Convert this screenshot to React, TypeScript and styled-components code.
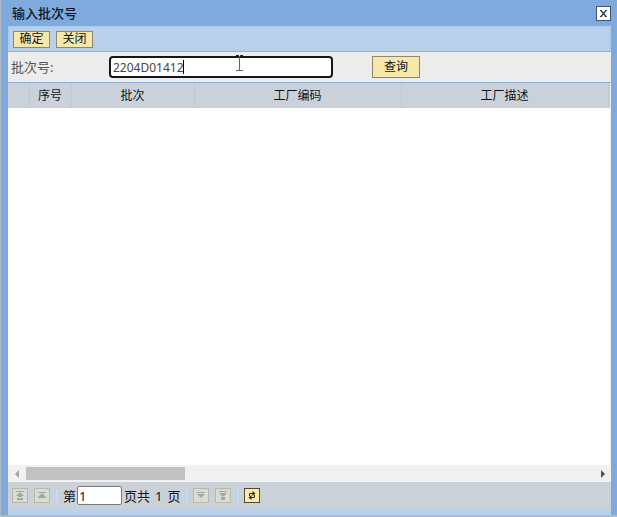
import React, { useState } from "react";
import styled, { createGlobalStyle } from "styled-components";

const GlobalStyle = createGlobalStyle`
  *, *::before, *::after { box-sizing: border-box; }
  body {
    margin: 0;
    color: #10141c;
    background: #b3b6ba;
    font: 12px/16px "Noto Sans", "Noto Sans CJK SC", sans-serif;
  }
  button, input { font: inherit; color: inherit; margin: 0; }
`;

const Dialog = styled.section`
  display: flex;
  flex-direction: column;
  min-height: 100vh;
  padding: 0 6px 0 7px;
  background: #7eaade;
  border: solid #b3b9c3;
  border-width: 0 0 2px 1px;
`;

const TitleBar = styled.header`
  display: flex;
  align-items: center;
  justify-content: space-between;
  height: 26px;
  padding-left: 4px;
`;

const Title = styled.h1`
  margin: 0;
  font-size: 13px;
  font-weight: 500;
`;

const CloseButton = styled.button`
  display: grid;
  place-items: center;
  width: 15px;
  height: 15px;
  padding: 0;
  background: #fff;
  border: 1px solid #3f5279;
`;

const Toolbar = styled.div`
  display: flex;
  align-items: center;
  gap: 6px;
  height: 26px;
  padding: 0 4px;
  background: #b8d0e9;
  border: 1px solid #a9c9ef;
  border-bottom-color: #8dafdc;
`;

const ActionButton = styled.button<{ $large?: boolean }>`
  display: grid;
  place-items: center;
  width: ${(p) => (p.$large ? 48 : 37)}px;
  height: ${(p) => (p.$large ? 22 : 17)}px;
  padding: 0;
  line-height: 14px;
  background: #f6e8aa;
  border: 1px solid #92866f;
`;

const QueryForm = styled.form`
  display: flex;
  align-items: center;
  height: 31px;
  padding-left: 3px;
  background: #ececec;
  border-bottom: 1px solid #8daad5;
`;

const FieldLabel = styled.label`
  width: 98px;
  font-size: 13px;
  color: #50545a;
`;

const FieldBox = styled.div`
  position: relative;
  width: 224px;
  margin-right: 39px;
`;

const BatchInput = styled.input`
  display: block;
  width: 100%;
  height: 22px;
  padding: 0 2px;
  color: #454545;
  background: #fff;
  border: 2px solid #14161b;
  border-radius: 4px;
  outline: none;
`;

const Caret = styled.span`
  position: absolute;
  top: 4px;
  left: 74px;
  width: 1px;
  height: 14px;
  background: #000;
`;

const Pointer = styled.svg`
  position: absolute;
  top: -1px;
  left: 126px;
  pointer-events: none;
`;

const TableArea = styled.div`
  flex: 1;
  overflow: hidden;
  background: #fff;
  border-right: 1px solid #e8edf5;
`;

const Table = styled.table`
  width: 130%;
  min-width: 700px;
  table-layout: fixed;
  border-collapse: collapse;
`;

const HeadCell = styled.th<{ $width?: number }>`
  width: ${(p) => (p.$width ? `${p.$width}px` : "auto")};
  height: 25px;
  padding: 0;
  font-weight: 400;
  background: #cbd1d9;
  border-right: 1px solid #c1c7d0;
`;

const ScrollBar = styled.div`
  display: grid;
  grid-template-columns: 18px 1fr 18px;
  align-items: center;
  height: 17px;
  background: #f1f1f1;
`;

const ScrollButton = styled.button`
  display: grid;
  place-items: center;
  height: 17px;
  padding: 0;
  background: none;
  border: 0;
`;

const ScrollThumb = styled.div`
  width: 28%;
  height: 13px;
  background: #c1c1c1;
`;

const Pager = styled.footer`
  display: flex;
  align-items: center;
  height: 27px;
  padding-left: 4px;
  background: #cbd1d9;
  font-size: 13px;
`;

const PagerButtons = styled.div`
  display: flex;
  gap: 6px;
`;

const PagerButton = styled.button<{ $active?: boolean }>`
  display: grid;
  place-items: center;
  width: 16px;
  height: 15px;
  padding: 0;
  color: ${(p) => (p.$active ? "#29261e" : "#a4a9a0")};
  background: ${(p) => (p.$active ? "#ffebaa" : "#dadcd4")};
  border: 1px solid ${(p) => (p.$active ? "#51483d" : "#b7baaf")};
`;

const Separator = styled.span`
  width: 2px;
  height: 14px;
  margin: 0 5px 0 6px;
  background: #bfdcff;
`;

const PageInput = styled.input`
  width: 45px;
  height: 19px;
  margin: 0 2px 0 1px;
  padding: 0 1px;
  background: #fff;
  border: 1px solid #777b80;
  border-radius: 2px;
`;

const PageTotal = styled.span`
  display: flex;
  gap: 5px;
  white-space: nowrap;
`;

const StatusStrip = styled.div`
  height: 6px;
  background: #b9d1ec;
`;

const columns: { name: string; width?: number }[] = [
  { name: "", width: 21 },
  { name: "序号", width: 42 },
  { name: "批次", width: 123 },
  { name: "工厂编码", width: 207 },
  { name: "工厂描述", width: 207 },
  { name: "" },
];

function PageIcon({ down = false, end = false }: { down?: boolean; end?: boolean }) {
  return (
    <svg width="10" height="9" viewBox="0 0 10 9" aria-hidden="true">
      <path d={end ? "M1 0h8v1H1z" : "M1 1h8v1H1z"} fill="currentColor" />
      {end ? (
        <path
          d={down ? "M1 2h8L5 6zM3 6h4v3H3z" : "M5 1l4 4H7v1H3V5H1zM2 7h6v2H2z"}
          fill="currentColor"
        />
      ) : (
        <path d={down ? "M1 3h8L5 7z" : "M5 2l4 4v1H1V6z"} fill="currentColor" />
      )}
    </svg>
  );
}

export default function App() {
  const [batch, setBatch] = useState("2204D01412");
  const [page, setPage] = useState("1");

  return (
    <>
      <GlobalStyle />
      <Dialog role="dialog" aria-labelledby="dialog-title">
        <TitleBar>
          <Title id="dialog-title">输入批次号</Title>
          <CloseButton aria-label="关闭窗口">
            <svg width="9" height="9" viewBox="0 0 9 9" fill="none" aria-hidden="true">
              <path d="M2 1.5l5 6M7 1.5l-5 6" stroke="#323b52" strokeWidth="1.4" />
              <path d="M1 1.5h2M6 1.5h2M1 7.5h2M6 7.5h2" stroke="#323b52" />
            </svg>
          </CloseButton>
        </TitleBar>
        <Toolbar>
          <ActionButton>确定</ActionButton>
          <ActionButton>关闭</ActionButton>
        </Toolbar>
        <QueryForm onSubmit={(e) => e.preventDefault()}>
          <FieldLabel htmlFor="batch">批次号:</FieldLabel>
          <FieldBox>
            <BatchInput id="batch" value={batch} onChange={(e) => setBatch(e.target.value)} />
            <Caret />
            <Pointer width="9" height="17" viewBox="0 0 9 17" fill="none" aria-hidden="true">
              <path d="M1 .5h2.5l1 1 1-1H8" stroke="#14161b" />
              <path d="M4.5 1v14M1 15.5h7" stroke="#606266" />
            </Pointer>
          </FieldBox>
          <ActionButton $large type="submit">
            查询
          </ActionButton>
        </QueryForm>
        <TableArea>
          <Table>
            <thead>
              <tr>
                {columns.map((column, i) => (
                  <HeadCell key={i} scope="col" $width={column.width}>
                    {column.name}
                  </HeadCell>
                ))}
              </tr>
            </thead>
            <tbody />
          </Table>
        </TableArea>
        <ScrollBar>
          <ScrollButton aria-label="向左滚动">
            <svg width="5" height="8" viewBox="0 0 5 8" aria-hidden="true">
              <path d="M4 0v8L0 4z" fill="#a3a3a3" />
            </svg>
          </ScrollButton>
          <ScrollThumb />
          <ScrollButton aria-label="向右滚动">
            <svg width="5" height="8" viewBox="0 0 5 8" aria-hidden="true">
              <path d="M1 0v8l4-4z" fill="#505050" />
            </svg>
          </ScrollButton>
        </ScrollBar>
        <Pager>
          <PagerButtons>
            <PagerButton disabled aria-label="首页">
              <PageIcon end />
            </PagerButton>
            <PagerButton disabled aria-label="上一页">
              <PageIcon />
            </PagerButton>
          </PagerButtons>
          <Separator />
          <label htmlFor="page">第</label>
          <PageInput id="page" value={page} onChange={(e) => setPage(e.target.value)} />
          <PageTotal>
            <span>页共</span>
            <span>1</span>
            <span>页</span>
          </PageTotal>
          <Separator />
          <PagerButtons>
            <PagerButton disabled aria-label="下一页">
              <PageIcon down />
            </PagerButton>
            <PagerButton disabled aria-label="末页">
              <PageIcon down end />
            </PagerButton>
          </PagerButtons>
          <Separator />
          <PagerButton $active aria-label="刷新">
            <svg width="10" height="11" viewBox="0 0 10 11" fill="none" aria-hidden="true">
              <path d="M2.5 6V3.5H6M7.500 5v2.500H4" stroke="currentColor" />
              <path d="M5.500 1v5L8.500 3.500zM4.500 5v5L1.500 7.500z" fill="currentColor" />
            </svg>
          </PagerButton>
        </Pager>
        <StatusStrip />
      </Dialog>
    </>
  );
}
